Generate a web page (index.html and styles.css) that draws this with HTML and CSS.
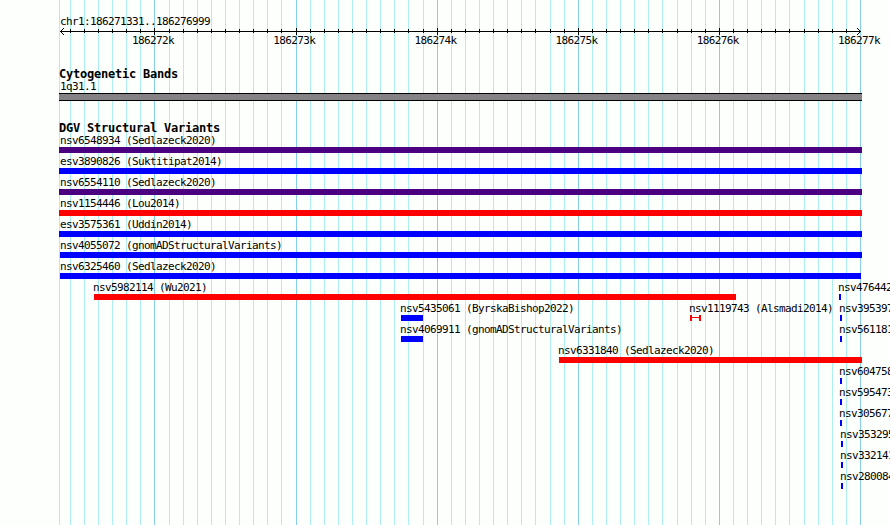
FILE: index.html
```html
<!DOCTYPE html>
<html lang="en">
<head>
  <meta charset="UTF-8">
  <title>chr1:186271331..186276999</title>
  <link rel="stylesheet" href="styles.css">
</head>
<body>
  <div class="browser">
    <!-- Grid lines, drawn behind every track -->
    <svg class="grid" width="890" height="525" shape-rendering="crispEdges">
      <path id="minor-lines" class="minor" />
      <path id="major-lines" class="major" />
    </svg>

    <!-- Scale -->
    <section class="scale">
      <div class="label">chr1:186271331..186276999</div>
      <svg class="ruler" width="890" height="9" shape-rendering="crispEdges">
        <path d="M60 4.5H861" />
        <path id="minor-ticks" />
        <path id="major-ticks" />
        <path d="M60 4.5h1M61 3.5h1M61 5.5h1M62 2.5h1M62 6.5h1M63 1.5h1M63 7.5h1M860 4.5h1M859 3.5h1M859 5.5h1M858 2.5h1M858 6.5h1M857 1.5h1M857 7.5h1" />
      </svg>
      <div class="numbers">
        <span>186272k</span><span>186273k</span><span>186274k</span><span>186275k</span><span>186276k</span><span>186277k</span>
      </div>
    </section>

    <!-- Cytogenetic bands -->
    <section class="bands">
      <h2>Cytogenetic Bands</h2>
      <div class="label">1q31.1</div>
      <div class="band"></div>
    </section>

    <!-- Structural variants -->
    <section class="variants">
      <h2>DGV Structural Variants</h2>
      <div id="rows"></div>
    </section>
  </div>

  <script>
    const major = [154, 296, 437, 578, 719, 860];
    const minor = [
      70, 84, 98, 112, 126, 140,
      169, 183, 197, 211, 225, 239, 253, 267, 281,
      310, 324, 338, 352, 366, 380, 394, 408, 423,
      451, 465, 479, 493, 507, 521, 535, 550, 564,
      592, 606, 620, 634, 648, 662, 677, 691, 705,
      733, 747, 761, 775, 789, 804, 818, 832, 846
    ];

    // One vertical stroke per x position
    function lines(xs, top, height) {
      return xs.map(x => `M${x + 0.5} ${top}v${height}`).join("");
    }

    document.getElementById("minor-lines").setAttribute("d", lines([59, ...minor], 0, 525));
    document.getElementById("major-lines").setAttribute("d", lines(major, 0, 525));
    document.getElementById("minor-ticks").setAttribute("d", lines(minor, 2, 4));
    document.getElementById("major-ticks").setAttribute("d", lines(major.slice(0, -1), 1, 7));

    // Each row holds features as [name, start, end, type]
    const rows = [
      [["nsv6548934 (Sedlazeck2020)", 59, 862, "complex"]],
      [["esv3890826 (Suktitipat2014)", 59, 862, "gain"]],
      [["nsv6554110 (Sedlazeck2020)", 59, 862, "complex"]],
      [["nsv1154446 (Lou2014)", 59, 862, "loss"]],
      [["esv3575361 (Uddin2014)", 59, 862, "gain"]],
      [["nsv4055072 (gnomADStructuralVariants)", 60, 862, "gain"]],
      [["nsv6325460 (Sedlazeck2020)", 60, 861, "gain"]],
      [["nsv5982114 (Wu2021)", 94, 736, "loss"], ["nsv476442", 839, 841, "gain"]],
      [["nsv5435061 (ByrskaBishop2022)", 401, 423, "gain"], ["nsv1119743 (Alsmadi2014)", 690, 701, "span"], ["nsv395397", 840, 842, "gain"]],
      [["nsv4069911 (gnomADStructuralVariants)", 401, 423, "gain"], ["nsv561181", 840, 842, "gain"]],
      [["nsv6331840 (Sedlazeck2020)", 559, 862, "loss"]],
      [["nsv604758", 840, 842, "gain"]],
      [["nsv595473", 840, 842, "gain"]],
      [["nsv305677", 840, 842, "gain"]],
      [["nsv353295", 841, 843, "gain"]],
      [["nsv332141", 841, 843, "gain"]],
      [["nsv280084", 841, 843, "gain"]]
    ];

    const container = document.getElementById("rows");
    rows.forEach(features => {
      const row = document.createElement("div");
      row.className = "row";
      let x = 0;
      features.forEach(([name, start, end, type]) => {
        // Names never start left of the panel
        const align = start === 59 ? " edge" : start > 60 ? " inner" : "";
        const feature = document.createElement("div");
        feature.className = "feature";
        feature.style.marginLeft = `${start - x}px`;
        feature.style.width = `${end - start}px`;
        feature.innerHTML = `<div class="name${align}">${name}</div><div class="bar ${type}"></div>`;
        row.appendChild(feature);
        x = end;
      });
      container.appendChild(row);
    });
  </script>
</body>
</html>
```
FILE: styles.css
```css
body {
  margin: 0;
  background-color: #fdfffc;
  color: #000;
  font-family: "DejaVu Sans Mono", monospace;
  font-size: 11px;
  line-height: 13px;
  letter-spacing: -0.62px;
}

.browser {
  position: relative;
  width: 890px;
  height: 525px;
  overflow: hidden;
  white-space: nowrap;
}

.grid {
  position: absolute;
  top: 0;
  left: 0;
  z-index: -1;
}

.minor {
  stroke: #afeeee;
}

.major {
  stroke: #87ceeb;
}

.scale {
  padding-top: 15px;
}

.label {
  height: 12px;
  padding-left: 60px;
}

.ruler {
  display: block;
  fill: none;
  stroke: #000;
}

.numbers {
  display: flex;
  justify-content: space-between;
  width: 748px;
  margin: -2px 0 0 132px;
}

h2 {
  height: 12px;
  margin: 0;
  padding-left: 59px;
  font-size: 12px;
  line-height: 13px;
  letter-spacing: -0.22px;
}

.bands {
  padding-top: 21px;
}

.band {
  width: 803px;
  height: 6px;
  margin: 1px 0 0 59px;
  border-top: 1px solid #000;
  border-bottom: 1px solid #000;
  background-color: #848284;
}

.variants {
  padding-top: 21px;
}

.row {
  display: flex;
  height: 21px;
}

.feature {
  flex: none;
}

.name {
  height: 13px;
}

.edge {
  margin-left: 1px;
}

.inner {
  margin-left: -1px;
}

.bar {
  height: 6px;
}

.gain {
  background-color: #0000ff;
}

.loss {
  background-color: #ff0000;
}

.complex {
  background-color: #4b0082;
}

/* Thin line with a cap on both ends */
.span {
  box-sizing: border-box;
  border: solid #ff0000;
  border-width: 0 2px;
  background: linear-gradient(#ff0000, #ff0000) 0 2px / 100% 1px no-repeat;
}
```
